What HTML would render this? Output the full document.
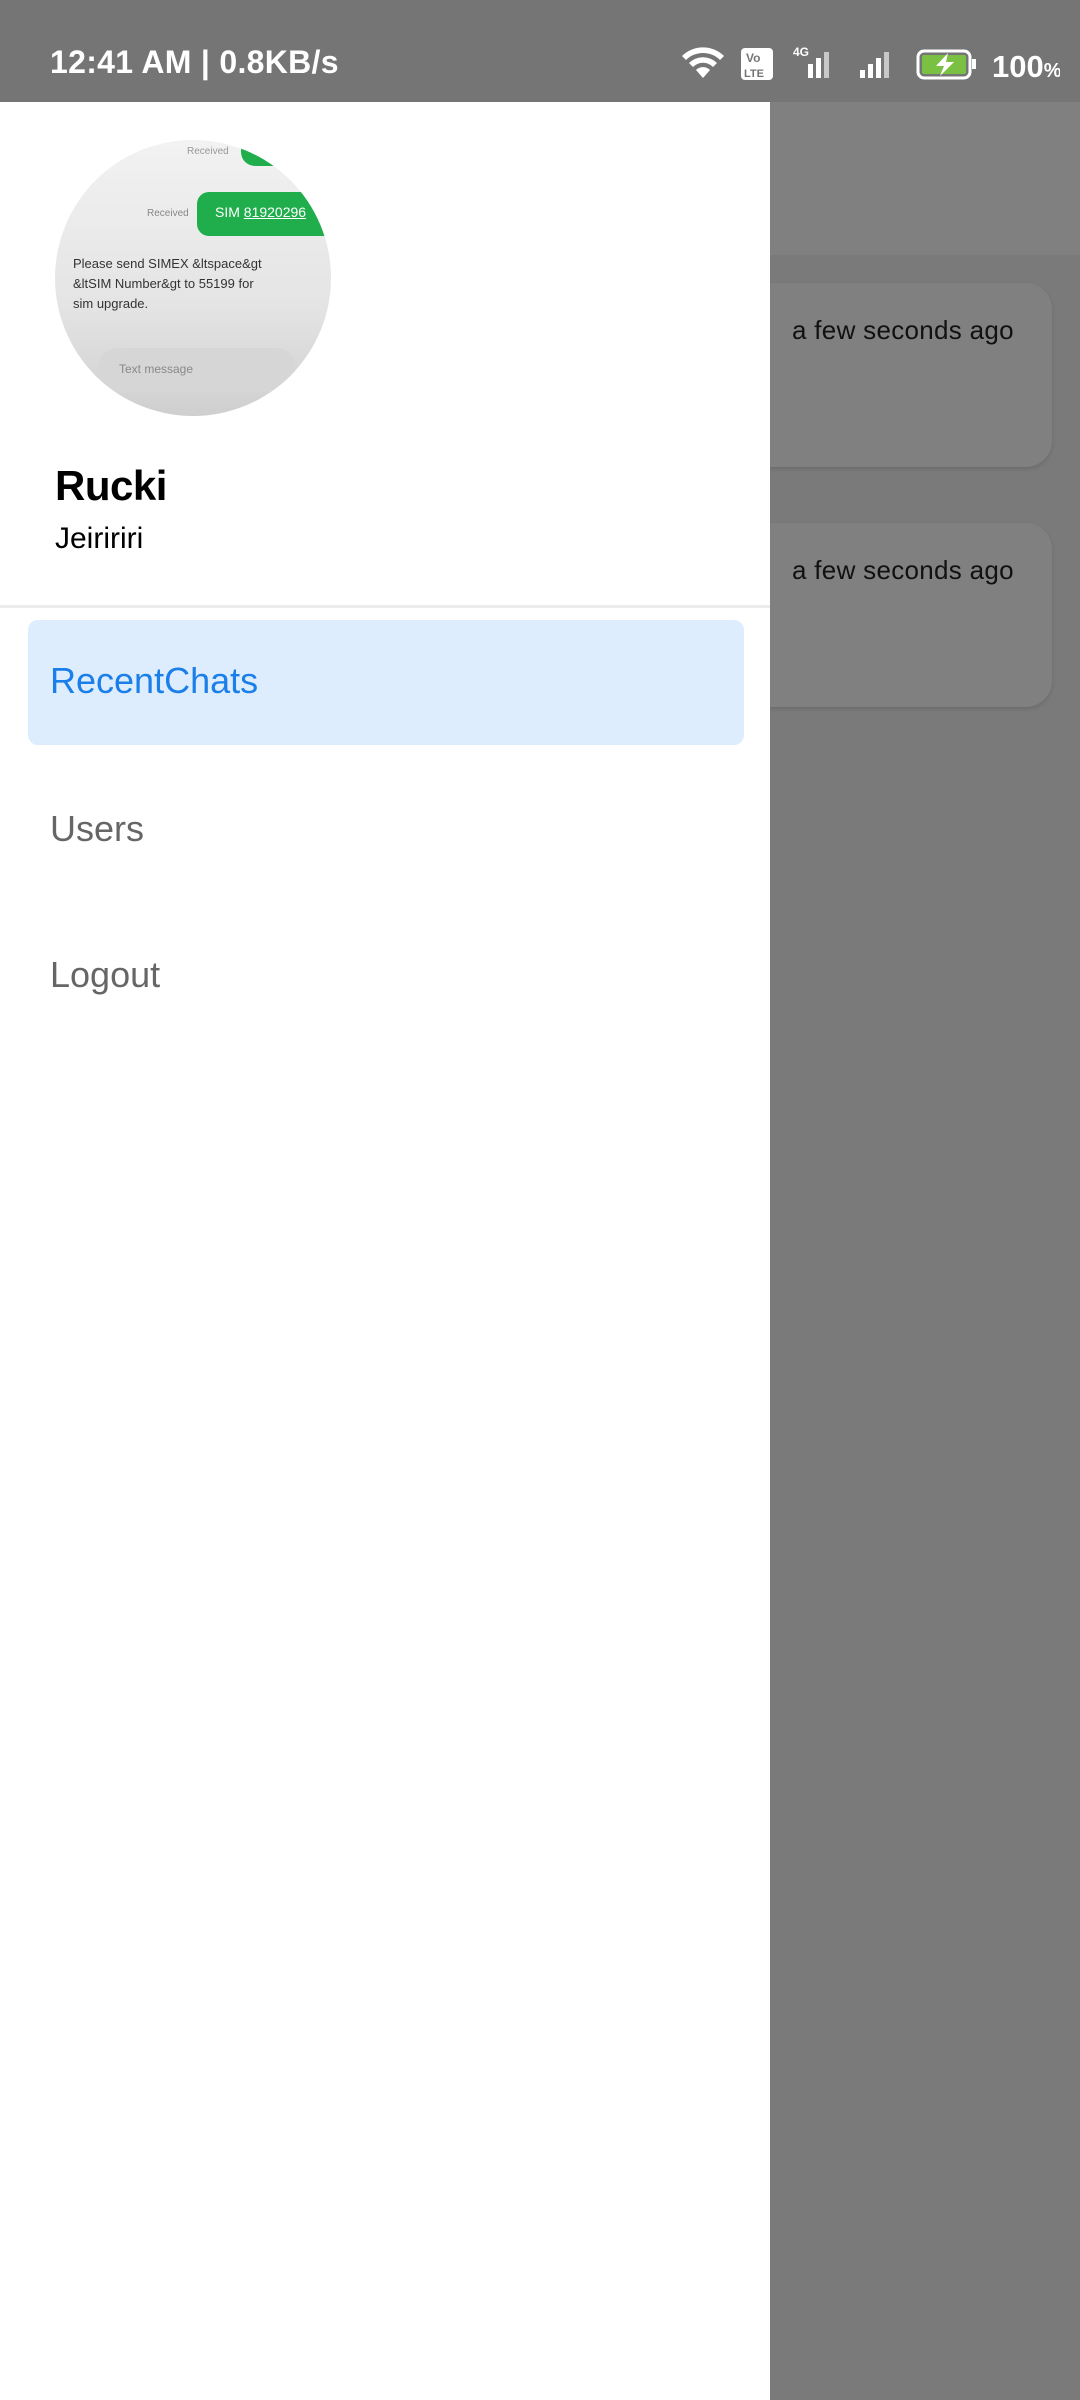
<!DOCTYPE html>
<html><head><meta charset="utf-8"><style>
*{margin:0;padding:0;box-sizing:border-box}
body{width:1080px;height:2400px;position:relative;overflow:hidden;background:#7a7a7a;font-family:"Liberation Sans",Roboto,sans-serif}
.sb{position:absolute;left:0;top:0;width:1080px;height:102px;background:#757575;color:#fff}
.sb .t{position:absolute;left:50px;top:44px;font-size:32px;font-weight:bold;letter-spacing:0.3px}
.appbar{position:absolute;left:770px;top:102px;width:310px;height:153px;background:#808080}
.card{position:absolute;left:740px;width:312px;height:184px;background:#808080;border-radius:26px;box-shadow:0 2px 4px rgba(0,0,0,.12)}
.card span{position:absolute;left:52px;top:32px;font-size:26px;color:#111;letter-spacing:0.3px}
.drawer{position:absolute;left:0;top:102px;width:770px;height:2298px;background:#fff}
.av{position:absolute;left:55px;top:38px;width:276px;height:276px;border-radius:50%;overflow:hidden;background:linear-gradient(180deg,#f2f2f2 0%,#e4e4e4 60%,#cfcfcf 100%)}
.name{position:absolute;left:55px;top:360px;font-size:42px;font-weight:bold;color:#000;letter-spacing:-0.5px}
.sub{position:absolute;left:55px;top:420px;font-size:30px;color:#000}
.div{position:absolute;left:0;top:503px;width:770px;height:3px;background:#ececec}
.sel{position:absolute;left:28px;top:518px;width:716px;height:125px;background:#deedfd;border-radius:10px}
.item{position:absolute;left:50px;font-size:36px}
</style></head><body>
<div class="sb"><div class="t">12:41 AM | 0.8KB/s</div>
<svg style="position:absolute;left:680px;top:44px" width="380" height="40" viewBox="0 0 380 40">
<g fill="#fff">
<path d="M2 12 A30 30 0 0 1 44 12 L40 16 A24 24 0 0 0 6 16Z"/><path d="M9 19 A20 20 0 0 1 37 19 L33 23 A14 14 0 0 0 13 23Z"/><path d="M16 26 A10 10 0 0 1 30 26 L23 34Z"/>
<rect x="61" y="4" width="32" height="32" rx="4"/>
<rect x="128" y="20" width="5" height="14"/><rect x="136" y="14" width="5" height="20"/><rect x="144" y="8" width="5" height="26" opacity=".6"/>
<rect x="180" y="26" width="5" height="8"/><rect x="188" y="20" width="5" height="14"/><rect x="196" y="14" width="5" height="20"/><rect x="204" y="8" width="5" height="26" opacity=".6"/>
<text x="113" y="12" font-size="12" font-weight="bold" font-family="Liberation Sans">4G</text>
</g>
<text x="66" y="18" font-size="12" fill="#757575" font-family="Liberation Sans" font-weight="bold">Vo</text>
<text x="64" y="33" font-size="11" fill="#757575" font-family="Liberation Sans" font-weight="bold">LTE</text>
<rect x="238" y="7" width="52" height="27" rx="6" fill="none" stroke="#fff" stroke-width="3"/>
<rect x="242" y="11" width="44" height="19" rx="2" fill="#7ac143"/>
<rect x="292" y="15" width="4" height="10" fill="#fff"/>
<path d="M268 9 L256 22 L264 22 L260 32 L274 18 L266 18Z" fill="#fff"/>
<text x="312" y="33" font-size="31" fill="#fff" font-weight="bold" font-family="Liberation Sans">100<tspan font-size="20">%</tspan></text>
</svg></div>
<div class="appbar"></div>
<div class="card" style="top:283px"><span>a few seconds ago</span></div>
<div class="card" style="top:523px"><span>a few seconds ago</span></div>
<div class="drawer">
<div class="av">
<div style="position:absolute;left:186px;top:-10px;width:120px;height:36px;background:#1fae4b;border-radius:14px"></div>
<div style="position:absolute;left:142px;top:52px;width:160px;height:44px;background:#1fae4b;border-radius:12px"></div>
<div style="position:absolute;left:160px;top:64px;color:#fff;font-size:14px">SIM <u>81920296</u></div>
<div style="position:absolute;left:92px;top:68px;color:#888;font-size:10px">Received</div>
<div style="position:absolute;left:132px;top:6px;color:#999;font-size:10px">Received</div>
<div style="position:absolute;left:18px;top:114px;width:270px;color:#333;font-size:13px;line-height:20px">Please send SIMEX &amp;ltspace&amp;gt<br>&amp;ltSIM Number&amp;gt to 55199 for<br>sim upgrade.</div>
<div style="position:absolute;left:44px;top:208px;width:196px;height:44px;background:#d6d6d6;border-radius:18px;color:#888;font-size:12px;padding:14px 20px">Text message</div>
</div>
<div class="name">Rucki</div>
<div class="sub">Jeiririri</div>
<div class="div"></div>
<div class="sel"></div>
<div class="item" style="top:558px;color:#1a7fe8">RecentChats</div>
<div class="item" style="top:706px;color:#666">Users</div>
<div class="item" style="top:852px;color:#666">Logout</div>
</div>
</body></html>
